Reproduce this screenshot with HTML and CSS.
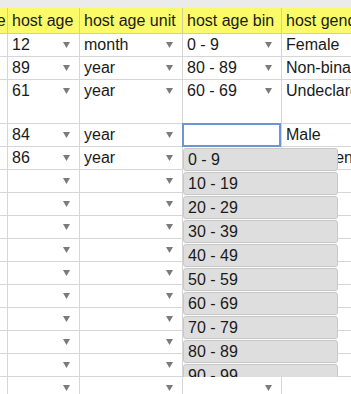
FILE: index.html
```html
<!DOCTYPE html>
<html lang="en">
<head>
    <meta charset="UTF-8">
    <title>Samples</title>
    <link rel="stylesheet" href="styles.css">
</head>
<body>

<div class="toolbar"></div>

<div class="sheet">
    <!-- header -->
    <div class="cell head">host life stage</div>
    <div class="cell head">host age</div>
    <div class="cell head">host age unit</div>
    <div class="cell head">host age bin</div>
    <div class="cell head">host gender</div>

    <div class="cell"></div>
    <div class="cell">12<span class="caret"></span></div>
    <div class="cell">month<span class="caret"></span></div>
    <div class="cell">0 - 9<span class="caret"></span></div>
    <div class="cell">Female</div>

    <div class="cell"></div>
    <div class="cell">89<span class="caret"></span></div>
    <div class="cell">year<span class="caret"></span></div>
    <div class="cell">80 - 89<span class="caret"></span></div>
    <div class="cell">Non-binary</div>

    <div class="cell tall"></div>
    <div class="cell tall">61<span class="caret"></span></div>
    <div class="cell tall">year<span class="caret"></span></div>
    <div class="cell tall">60 - 69<span class="caret"></span></div>
    <div class="cell tall">Undeclared</div>

    <div class="cell"></div>
    <div class="cell">84<span class="caret"></span></div>
    <div class="cell">year<span class="caret"></span></div>
    <div class="cell editing">
        <div class="editor"></div>
        <div class="options">
            <div class="option">0 - 9</div>
            <div class="option">10 - 19</div>
            <div class="option">20 - 29</div>
            <div class="option">30 - 39</div>
            <div class="option">40 - 49</div>
            <div class="option">50 - 59</div>
            <div class="option">60 - 69</div>
            <div class="option">70 - 79</div>
            <div class="option">80 - 89</div>
            <div class="option">90 - 99</div>
            <div class="option">100+</div>
        </div>
    </div>
    <div class="cell">Male</div>

    <div class="cell"></div>
    <div class="cell">86<span class="caret"></span></div>
    <div class="cell">year<span class="caret"></span></div>
    <div class="cell"><span class="caret"></span></div>
    <div class="cell">Transgender</div>

    <div class="cell"></div><div class="cell"><span class="caret"></span></div><div class="cell"><span class="caret"></span></div><div class="cell"><span class="caret"></span></div><div class="cell"></div>
    <div class="cell"></div><div class="cell"><span class="caret"></span></div><div class="cell"><span class="caret"></span></div><div class="cell"><span class="caret"></span></div><div class="cell"></div>
    <div class="cell"></div><div class="cell"><span class="caret"></span></div><div class="cell"><span class="caret"></span></div><div class="cell"><span class="caret"></span></div><div class="cell"></div>
    <div class="cell"></div><div class="cell"><span class="caret"></span></div><div class="cell"><span class="caret"></span></div><div class="cell"><span class="caret"></span></div><div class="cell"></div>
    <div class="cell"></div><div class="cell"><span class="caret"></span></div><div class="cell"><span class="caret"></span></div><div class="cell"><span class="caret"></span></div><div class="cell"></div>
    <div class="cell"></div><div class="cell"><span class="caret"></span></div><div class="cell"><span class="caret"></span></div><div class="cell"><span class="caret"></span></div><div class="cell"></div>
    <div class="cell"></div><div class="cell"><span class="caret"></span></div><div class="cell"><span class="caret"></span></div><div class="cell"><span class="caret"></span></div><div class="cell"></div>
    <div class="cell"></div><div class="cell"><span class="caret"></span></div><div class="cell"><span class="caret"></span></div><div class="cell"><span class="caret"></span></div><div class="cell"></div>
    <div class="cell"></div><div class="cell"><span class="caret"></span></div><div class="cell"><span class="caret"></span></div><div class="cell"><span class="caret"></span></div><div class="cell"></div>
    <div class="cell"></div><div class="cell"><span class="caret"></span></div><div class="cell"><span class="caret"></span></div><div class="cell"><span class="caret"></span></div><div class="cell"></div>
</div>

</body>
</html>
```

FILE: styles.css
```css
body {
    margin: 0;
    overflow: hidden;
    background: #fff;
    color: #1a1a1a;
    font-family: "Liberation Sans", Arial, sans-serif;
    font-size: 16px;
}
.toolbar {
    height: 8px;
    background: #ebebeb;
}
.sheet {
    display: grid;
    grid-template-columns: 105px 72px 103px 99px 150px;
    margin-left: -97px;
}
.cell {
    box-sizing: border-box;
    height: 23px;
    display: flex;
    align-items: flex-start;
    padding: 0 9px 0 4px;
    line-height: 22px;
    white-space: nowrap;
    overflow: hidden;
    border-right: 1px solid #d6d6d6;
    border-bottom: 1px solid #d6d6d6;
}
.cell.head {
    height: 26px;
    padding-top: 1px;
    line-height: 24px;
    background: #fbfb6a;
    border-color: #cfcfa0;
}
.cell.tall {
    height: 44px;
}
.caret {
    flex: none;
    width: 7px;
    height: 6px;
    margin-left: auto;
    margin-top: 8px;
    background: #7b7b7b;
    clip-path: polygon(0 0, 100% 0, 50% 100%);
}
.cell.editing {
    position: relative;
    overflow: visible;
}
.editor {
    position: absolute;
    top: -1px;
    left: -1px;
    right: 0;
    bottom: -1px;
    border: 2px solid #6c95d8;
    background: #fff;
}
.options {
    position: absolute;
    top: 24px;
    left: 0;
    width: 155px;
    height: 229px;
    overflow: hidden;
    background: #fafafa;
    z-index: 2;
}
.option {
    box-sizing: border-box;
    height: 23px;
    margin-bottom: 1px;
    padding-left: 4px;
    line-height: 21px;
    background: #dedede;
    border: 1px solid #c8c8c8;
    border-radius: 3px;
}
```
